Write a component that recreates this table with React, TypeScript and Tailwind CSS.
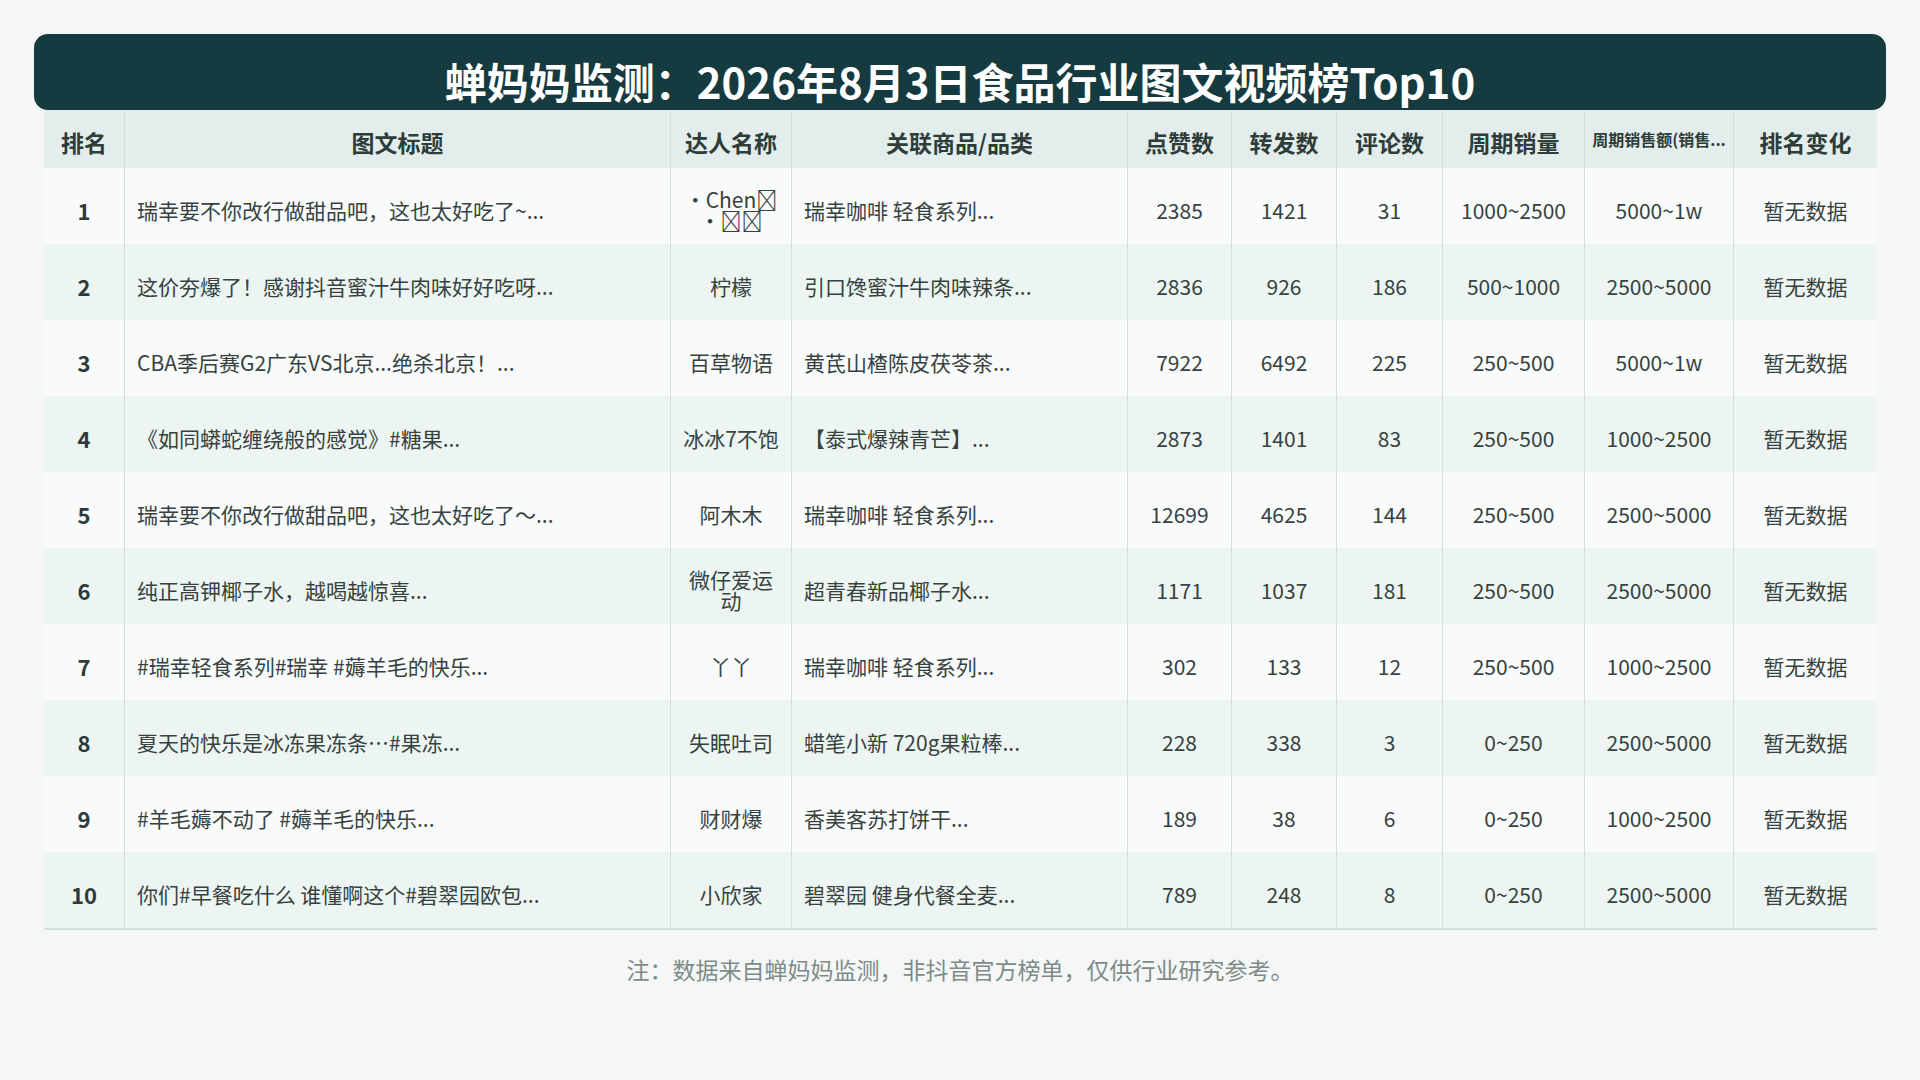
const COLS = "grid grid-cols-[81px_546px_121px_336px_104px_105px_106px_142px_149px_143px]";

const HEADERS = ["排名", "图文标题", "达人名称", "关联商品/品类", "点赞数", "转发数", "评论数", "周期销量", "周期销售额(销售...", "排名变化"];

const ROWS = [
  ["1", "瑞幸要不你改行做甜品吧，这也太好吃了~...", "", "瑞幸咖啡 轻食系列...", "2385", "1421", "31", "1000~2500", "5000~1w"],
  ["2", "这价夯爆了！感谢抖音蜜汁牛肉味好好吃呀...", "柠檬", "引口馋蜜汁牛肉味辣条...", "2836", "926", "186", "500~1000", "2500~5000"],
  ["3", "CBA季后赛G2广东VS北京...绝杀北京！...", "百草物语", "黄芪山楂陈皮茯苓茶...", "7922", "6492", "225", "250~500", "5000~1w"],
  ["4", "《如同蟒蛇缠绕般的感觉》#糖果...", "冰冰7不饱", "【泰式爆辣青芒】...", "2873", "1401", "83", "250~500", "1000~2500"],
  ["5", "瑞幸要不你改行做甜品吧，这也太好吃了～...", "阿木木", "瑞幸咖啡 轻食系列...", "12699", "4625", "144", "250~500", "2500~5000"],
  ["6", "纯正高钾椰子水，越喝越惊喜...", "微仔爱运动", "超青春新品椰子水...", "1171", "1037", "181", "250~500", "2500~5000"],
  ["7", "#瑞幸轻食系列#瑞幸 #薅羊毛的快乐...", "丫丫", "瑞幸咖啡 轻食系列...", "302", "133", "12", "250~500", "1000~2500"],
  ["8", "夏天的快乐是冰冻果冻条…#果冻...", "失眠吐司", "蜡笔小新 720g果粒棒...", "228", "338", "3", "0~250", "2500~5000"],
  ["9", "#羊毛薅不动了 #薅羊毛的快乐...", "财财爆", "香美客苏打饼干...", "189", "38", "6", "0~250", "1000~2500"],
  ["10", "你们#早餐吃什么 谁懂啊这个#碧翠园欧包...", "小欣家", "碧翠园 健身代餐全麦...", "789", "248", "8", "0~250", "2500~5000"],
];

const font = { fontFamily: "'Noto Sans CJK SC', 'Noto Sans', sans-serif" };

// first creator name: glyphs no installed font has, so they come out as empty boxes like the capture
function ChenName() {
  return (
    <span className="flex flex-col items-center">
      <span>{"・Chen\uE000"}</span>
      <span>{"・\uE000\uE000"}</span>
    </span>
  );
}

export default function App() {
  return (
    <div className="min-h-screen w-full bg-[#f4f7f6] px-[34px] pt-[34px]" style={font}>
      {/* title bar */}
      <div className="h-[76px] overflow-hidden rounded-[14px] bg-[#153a40] pt-[26px] text-center text-[42px] font-bold leading-none text-white">
        蝉妈妈监测：2026年8月3日食品行业图文视频榜Top10
      </div>

      {/* table */}
      <div className="ml-[10px] mr-[9px] border-b-2 border-[#d2dfdb]">
        <div className={`${COLS} h-[58px] bg-[#e3eeec] text-[#2e3c3a]`}>
          {HEADERS.map((h, i) => (
            <div
              key={h}
              className={`flex items-center justify-center whitespace-nowrap ${i < 9 ? "border-r border-[#d3dfdc]" : ""} ${
                i === 8 ? "px-2 text-[16px] font-bold leading-none" : "pt-[7px] text-[23px] font-bold leading-none"
              }`}
            >
              {h}
            </div>
          ))}
        </div>

        {ROWS.map((r, idx) => (
          <div key={r[0]} className={`${COLS} h-[76px] ${idx % 2 === 0 ? "bg-[#f9fbfb]" : "bg-[#edf5f2]"} text-[21px] leading-none text-[#374240]`}>
            <div className="flex items-center justify-center border-r border-[#d3dfdc] pt-[7px] text-[22px] font-bold text-[#2e3a39]">{r[0]}</div>
            <div className="flex items-center border-r border-[#d3dfdc] px-3 pt-[8px] whitespace-nowrap">{r[1]}</div>
            <div className="flex items-center justify-center border-r border-[#d3dfdc] px-3 pt-[8px] text-center">
              {idx === 0 ? <ChenName /> : r[2]}
            </div>
            <div className="flex items-center border-r border-[#d3dfdc] px-3 pt-[8px] whitespace-nowrap">{r[3]}</div>
            <div className="flex items-center justify-center border-r border-[#d3dfdc] pt-[8px]">{r[4]}</div>
            <div className="flex items-center justify-center border-r border-[#d3dfdc] pt-[8px]">{r[5]}</div>
            <div className="flex items-center justify-center border-r border-[#d3dfdc] pt-[8px]">{r[6]}</div>
            <div className="flex items-center justify-center border-r border-[#d3dfdc] pt-[8px]">{r[7]}</div>
            <div className="flex items-center justify-center border-r border-[#d3dfdc] pt-[8px]">{r[8]}</div>
            <div className="flex items-center justify-center pt-[8px]">暂无数据</div>
          </div>
        ))}
      </div>

      <p className="mt-[28px] text-center text-[23px] leading-none text-[#7e8b89]">
        注：数据来自蝉妈妈监测，非抖音官方榜单，仅供行业研究参考。
      </p>
    </div>
  );
}
